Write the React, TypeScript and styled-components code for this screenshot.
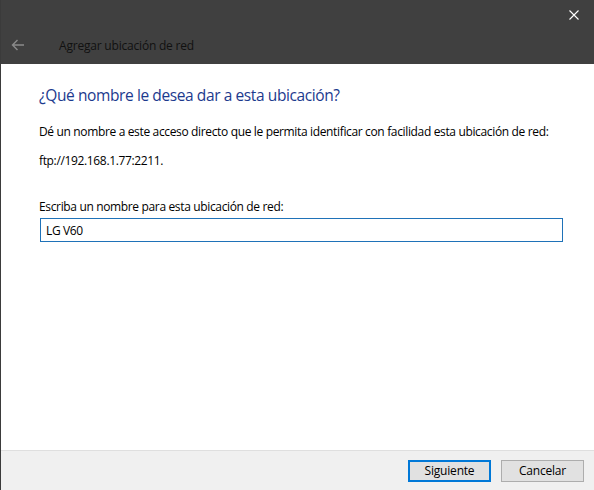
import styled, { createGlobalStyle } from "styled-components";

const GlobalStyle = createGlobalStyle`
    html, body {
        margin: 0;
        padding: 0;
        background: #ffffff;
    }

    body {
        font-family: "Open Sans", "Noto Sans", sans-serif;
        font-size: 12px;
        color: #000000;
    }

    * {
        box-sizing: border-box;
    }
`;

const Window = styled.div`
    width: 594px;
    height: 490px;
    display: flex;
    flex-direction: column;
    border-left: 1px solid #3b3b3b;
    background-color: #ffffff;
`;

const Header = styled.header`
    height: 64px;
    background-color: #404040;
    display: flex;
    flex-direction: column;
`;

const TitleBar = styled.div`
    height: 30px;
    display: flex;
    justify-content: flex-end;
`;

const CloseButton = styled.button`
    width: 34px;
    height: 30px;
    border: none;
    background: transparent;
    padding: 0;
    display: flex;
    align-items: center;
    justify-content: center;
    margin-right: 3px;
`;

const NavBar = styled.div`
    flex: 1;
    display: flex;
    align-items: center;
    padding-left: 9px;
    padding-bottom: 4px;
`;

const BackButton = styled.button`
    width: 16px;
    height: 16px;
    border: none;
    background: transparent;
    padding: 0;
    display: flex;
    align-items: center;
    justify-content: center;
`;

const WindowTitle = styled.span`
    margin-left: 33px;
    font-size: 12px;
    letter-spacing: -0.2px;
    color: #111111;
`;

const Content = styled.main`
    flex: 1;
    padding: 20px 32px 0 38px;
    display: flex;
    flex-direction: column;
`;

const Heading = styled.h1`
    margin: 0;
    font-size: 15.5px;
    font-weight: 400;
    letter-spacing: -0.4px;
    color: #1c3a8e;
    line-height: 22px;
`;

const Paragraph = styled.p<{ $gap: number }>`
    margin: ${(p) => p.$gap}px 0 0;
    font-size: 12px;
    line-height: 16px;
    letter-spacing: -0.35px;
`;

const Field = styled.label`
    margin-top: 29px;
    display: flex;
    flex-direction: column;
    gap: 3px;
    font-size: 12px;
    letter-spacing: -0.35px;
`;

const Input = styled.input`
    margin-left: 1px;
    width: 523px;
    height: 24px;
    border: 1px solid #1f72b8;
    padding: 0 5px;
    font-family: inherit;
    font-size: 12px;
    letter-spacing: -0.35px;
    color: #000000;
    outline: none;
    caret-color: #000000;
`;

const Footer = styled.footer`
    height: 40px;
    border-top: 1px solid #dfdfdf;
    background-color: #f0f0f0;
    display: flex;
    justify-content: flex-end;
    align-items: center;
    gap: 10px;
    padding-right: 10px;
`;

const Button = styled.button<{ $primary?: boolean }>`
    width: 83px;
    height: 22px;
    font-family: inherit;
    font-size: 12px;
    letter-spacing: -0.2px;
    color: #000000;
    background-color: #e1e1e1;
    border: ${(p) => (p.$primary ? "2px solid #0078d7" : "1px solid #adadad")};
    padding: 0;
`;

export default function App(): JSX.Element {
    return (
        <>
            <GlobalStyle />
            <Window>
                <Header>
                    <TitleBar>
                        <CloseButton aria-label="Cerrar">
                            <svg width="10" height="10" viewBox="0 0 10 10">
                                <path d="M0.5 0.5 L9.5 9.5 M9.5 0.5 L0.5 9.5" stroke="#ffffff" strokeWidth="1.1" />
                            </svg>
                        </CloseButton>
                    </TitleBar>
                    <NavBar>
                        <BackButton aria-label="Atrás">
                            <svg width="14" height="12" viewBox="0 0 14 12">
                                <path d="M13 6 H1.5 M6.5 1 L1.5 6 L6.5 11" stroke="#8a8a8a" strokeWidth="1.4" fill="none" />
                            </svg>
                        </BackButton>
                        <WindowTitle>Agregar ubicación de red</WindowTitle>
                    </NavBar>
                </Header>
                <Content>
                    <Heading>¿Qué nombre le desea dar a esta ubicación?</Heading>
                    <Paragraph $gap={18}>
                        Dé un nombre a este acceso directo que le permita identificar con facilidad esta ubicación de red:
                    </Paragraph>
                    <Paragraph $gap={13}>ftp://192.168.1.77:2211.</Paragraph>
                    <Field>
                        Escriba un nombre para esta ubicación de red:
                        <Input defaultValue="LG V60" autoFocus />
                    </Field>
                </Content>
                <Footer>
                    <Button $primary>Siguiente</Button>
                    <Button>Cancelar</Button>
                </Footer>
            </Window>
        </>
    );
}
